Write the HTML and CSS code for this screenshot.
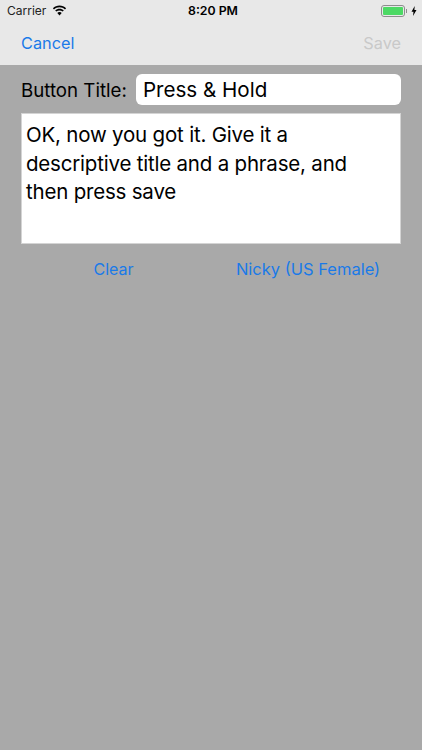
FILE: index.html
```html
<!DOCTYPE html>
<html lang="en">
<head>
<meta charset="utf-8">
<title>Edit Button</title>
<link rel="stylesheet" href="styles.css">
</head>
<body>
<header class="top">
  <div class="status">
    <div class="status-left">
      <span class="carrier">Carrier</span>
      <svg class="wifi" width="15" height="11" viewBox="0 0 15 11"><path d="M7.5 2.2c2.1 0 4 .8 5.5 2.2l1.100-1.200C12.300 1.500 10 .5 7.500.5S2.700 1.500.9 3.200L2 4.400c1.500-1.400 3.400-2.200 5.500-2.200z"/><path d="M7.500 5.400c1.200 0 2.300.5 3.200 1.200l1.100-1.200c-1.100-1-2.700-1.700-4.300-1.700s-3.200.7-4.300 1.700l1.100 1.200c.9-.7 2-1.200 3.200-1.200z"/><path d="M7.500 7.100c-.9 0-1.600.3-2.200.8l2.200 2.500 2.200-2.500c-.6-.5-1.300-.8-2.200-.8z"/></svg>
    </div>
    <div class="clock">8:20 PM</div>
    <div class="status-right">
      <span class="battery"><span class="battery-fill"></span></span>
      <span class="battery-cap"></span>
      <svg class="bolt" width="6" height="10" viewBox="0 0 5 10"><path d="M3.200 0 0 5.700h2L1.500 10 5 3.900H2.900z"/></svg>
    </div>
  </div>
  <nav class="nav">
    <span class="link">Cancel</span>
    <span class="save">Save</span>
  </nav>
</header>
<main class="content">
  <div class="title-row">
    <span class="title-label">Button Title:</span>
    <div class="title-field">Press &amp; Hold</div>
  </div>
  <div class="phrase">OK, now you got it. Give it a descriptive title and a phrase, and then press save</div>
  <div class="actions">
    <span class="link action-clear">Clear</span>
    <span class="link action-voice">Nicky (US Female)</span>
  </div>
</main>
</body>
</html>
```
FILE: styles.css
```css
* { box-sizing: border-box; }
html, body { margin: 0; height: 100%; }
body {
  width: 422px;
  height: 750px;
  overflow: hidden;
  background: #a9a9a9;
  color: #000;
  font-family: Inter, "Liberation Sans", sans-serif;
}
.top { height: 65px; background: #e8e8e8; }
.status {
  height: 20px;
  display: grid;
  grid-template-columns: 1fr auto 1fr;
  align-items: center;
  padding: 1px 5px 0 7px;
}
.status-left { display: flex; align-items: center; gap: 6px; }
.carrier { font-size: 12px; color: #222; }
.wifi { fill: #000; }
.clock { font-size: 12.300px; font-weight: 600; padding-left: 2px; }
.status-right { display: flex; align-items: center; justify-content: flex-end; }
.battery {
  width: 24px; height: 12px;
  border: 1px solid #8d8d8d;
  border-radius: 3px;
  padding: 1px;
  display: flex;
}
.battery-fill { flex: 1; background: #4cd964; border-radius: 1px; }
.battery-cap { width: 1.500px; height: 4px; background: #8d8d8d; margin-right: 4px; margin-left: 1px; }
.bolt { fill: #000; }
.nav {
  height: 45px;
  display: flex;
  align-items: center;
  justify-content: space-between;
  padding: 0 21px 0 21px;
  font-size: 16.300px;
}
.link { color: #1a7ae8; }
.save { color: #c9c9c9; }
.content { padding: 9px 21px 0 21px; }
.title-row { display: flex; align-items: center; gap: 9px; height: 31px; }
.title-label { font-size: 18.700px; white-space: nowrap; padding-top: 1px; }
.title-field {
  flex: 1;
  height: 31px;
  background: #fff;
  border-radius: 6px;
  padding: 0 7px;
  font-size: 20.600px;
  line-height: 31px;
}
.phrase {
  margin-top: 8px;
  height: 131px;
  background: #fff;
  border: 1px solid #d4d4d4;
  padding: 7px 24px 7px 4px;
  font-size: 20.500px;
  letter-spacing: -0.2px;
  line-height: 28.700px;
}
.actions {
  display: grid;
  grid-template-columns: 185px 1fr;
  margin-top: 14px;
  font-size: 16.500px;
  line-height: 22px;
}
.action-clear { text-align: center; font-size: 16px; }
.action-voice { text-align: center; padding-left: 9px; }
```
